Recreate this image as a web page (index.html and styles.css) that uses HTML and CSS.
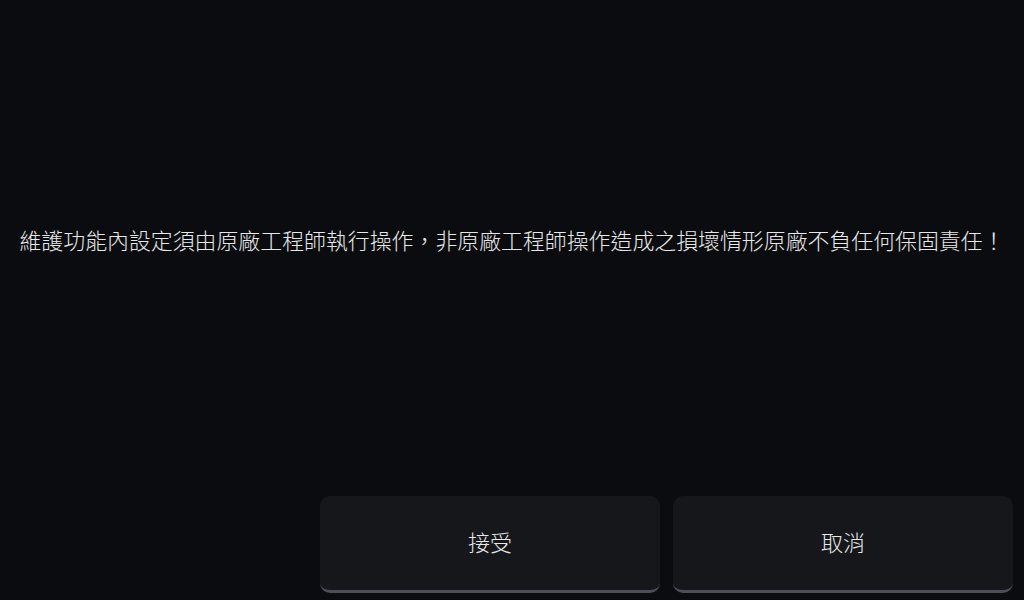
FILE: index.html
```html
<!DOCTYPE html>
<html lang="zh-Hant">
<head>
    <meta charset="UTF-8">
    <meta name="viewport" content="width=device-width, initial-scale=1.0">
    <title>維護功能</title>
    <link rel="stylesheet" href="styles.css">
</head>
<body>
    <div class="screen">
        <div class="notice">
            <p class="notice-text">維護功能內設定須由原廠工程師執行操作，非原廠工程師操作造成之損壞情形原廠不負任何保固責任！</p>
        </div>
        <div class="actions">
            <button class="action-button" id="accept">接受</button>
            <button class="action-button" id="cancel">取消</button>
        </div>
    </div>
</body>
</html>
```

FILE: styles.css
```css
body {
    margin: 0;
    background-color: #0b0c0f;
    font-family: "Noto Sans CJK TC", "Noto Sans", sans-serif;
    color: #e8e8e8;
}

.screen {
    height: 600px;
    display: flex;
    flex-direction: column;
}

.notice {
    flex: 1;
    display: flex;
    align-items: center;
    justify-content: center;
    padding-bottom: 18px;
}

.notice-text {
    margin: 0;
    font-size: 21.9px;
    font-weight: 300;
    white-space: nowrap;
}

.actions {
    display: flex;
    justify-content: flex-end;
    gap: 13px;
    padding: 0 11px 7px 0;
}

.action-button {
    width: 340px;
    height: 97px;
    padding: 0 0 4px;
    background-color: #16171b;
    border: none;
    border-bottom: 3px solid #4a4f58;
    border-radius: 10px;
    color: #e8e8e8;
    font-family: inherit;
    font-size: 22px;
    font-weight: 300;
    cursor: pointer;
}
```
